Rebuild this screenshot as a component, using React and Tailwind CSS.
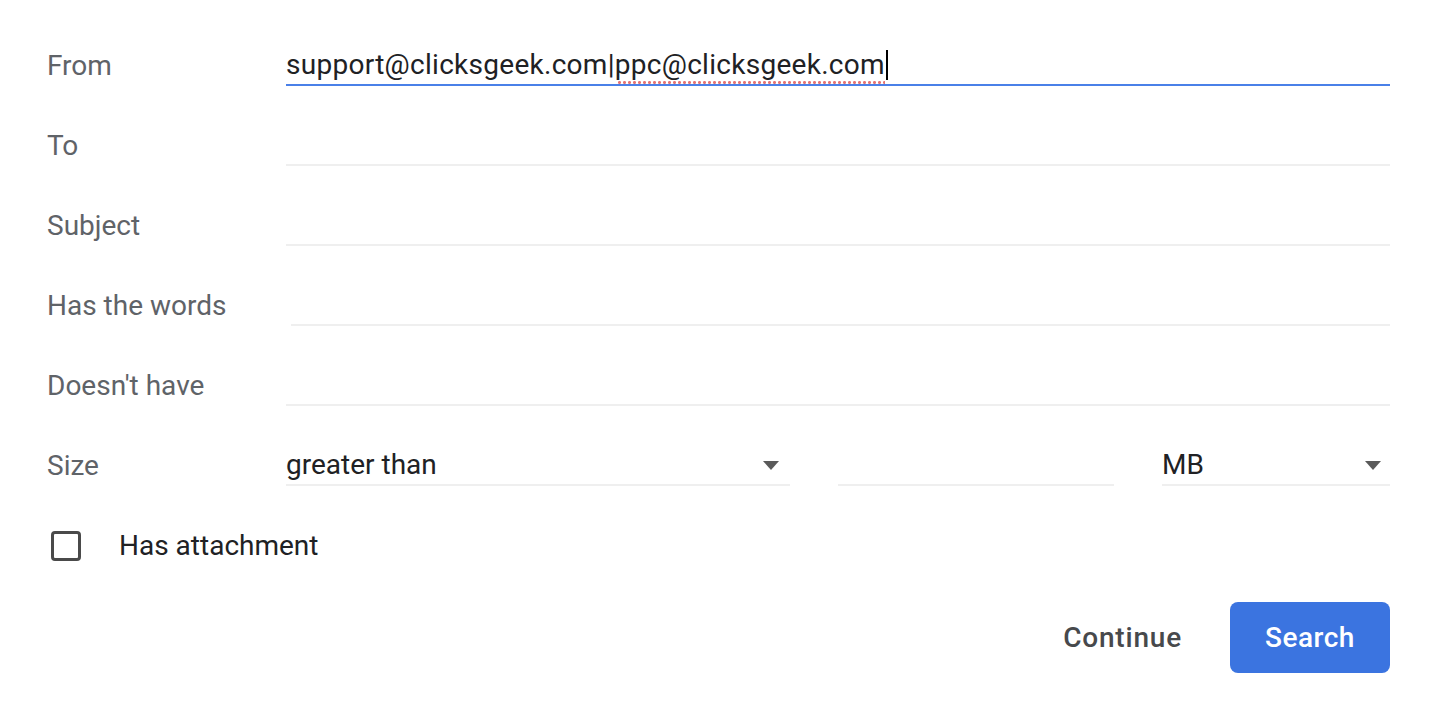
import { useState } from "react";

const LABEL = "w-[239px] shrink-0 text-[28px] text-[#5f6368]";

function Arrow() {
    return (
        <svg width="16" height="9" viewBox="0 0 16 9" className="shrink-0">
            <path d="M0 0h16L8 9z" fill="#5a5a5a" />
        </svg>
    );
}

function TextRow({ label, shift }) {
    return (
        <div className="flex items-center h-[80px]">
            <div className={LABEL}>{label}</div>
            <div className={`flex-1 h-[40px] border-b-2 border-[#efefef] ${shift ? "ml-[5px]" : ""}`} />
        </div>
    );
}

export default function App() {
    const [checked, setChecked] = useState(false);

    return (
        <div className="w-[1438px] h-[714px] bg-white pl-[47px] pr-[48px] pt-[26px] font-['Roboto',sans-serif] text-[#202124]">
            {/* From */}
            <div className="flex items-center h-[80px]">
                <div className={LABEL}>From</div>
                <div className="flex-1 h-[40px] border-b-2 border-[#4a80e8] flex items-center text-[28px] leading-none tracking-[0.28px]">
                    <span>support@clicksgeek.com|</span>
                    <span className="relative">
                        ppc@clicksgeek.com
                        {/* spellcheck dots */}
                        <span className="absolute left-[2px] right-0 bottom-[-5px] h-[3px] bg-[radial-gradient(circle,#e57373_1.3px,transparent_1.6px)] bg-[length:5px_3px]" />
                    </span>
                    <span className="w-[2px] h-[30px] bg-black ml-[1px]" />
                </div>
            </div>

            <TextRow label="To" />
            <TextRow label="Subject" />
            <TextRow label="Has the words" shift />
            <TextRow label="Doesn't have" />

            {/* Size */}
            <div className="flex items-center h-[80px]">
                <div className={LABEL}>Size</div>
                <div className="w-[504px] h-[40px] border-b-2 border-[#efefef] flex items-center justify-between pr-[11px]">
                    <span className="text-[28px]">greater than</span>
                    <Arrow />
                </div>
                <div className="w-[276px] ml-[48px] h-[40px] border-b-2 border-[#efefef]" />
                <div className="flex-1 ml-[48px] h-[40px] border-b-2 border-[#efefef] flex items-center justify-between pr-[9px]">
                    <span className="text-[28px]">MB</span>
                    <Arrow />
                </div>
            </div>

            {/* Has attachment */}
            <div className="flex items-center h-[80px]">
                <button
                    onClick={() => setChecked(!checked)}
                    className="ml-[4px] w-[30px] h-[30px] border-[3px] border-[#4a4a4a] rounded-[4px] bg-white"
                />
                <span className="ml-[38px] text-[28px] text-[#202124]">Has attachment</span>
            </div>

            {/* Buttons */}
            <div className="flex items-center justify-end mt-[16px]">
                <button className="text-[28px] font-medium tracking-[0.8px] text-[#47494c] mr-[48px]">Continue</button>
                <button className="w-[160px] h-[71px] rounded-[8px] bg-[#3b74e0] text-white text-[28px] font-medium tracking-[0.5px]">
                    Search
                </button>
            </div>
        </div>
    );
}
